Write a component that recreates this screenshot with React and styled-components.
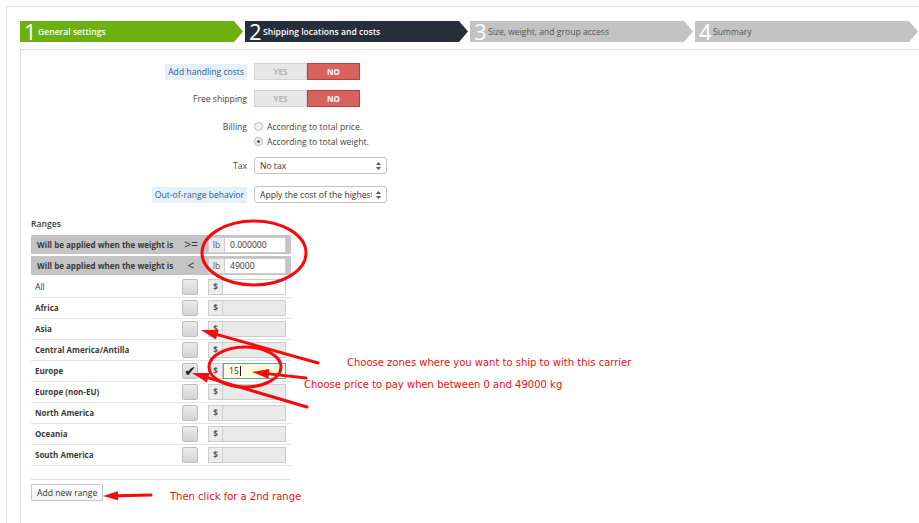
import React from "react";
import styled, { createGlobalStyle } from "styled-components";

const GlobalStyle = createGlobalStyle`
  html, body {
    margin: 0;
    padding: 0;
    background: #fff;
  }
  body {
    font-family: "Open Sans", "Liberation Sans", sans-serif;
    font-size: 8.6px;
    color: #444;
  }
`;

const Page = styled.div`
  position: relative;
  width: 919px;
  height: 523px;
  overflow: hidden;
  padding: 6px 0 0 6px;
  box-sizing: border-box;
`;

const Outer = styled.div`
  height: 100%;
  box-sizing: border-box;
  border-top: 1px solid #e0e0e0;
  border-left: 1px solid #e0e0e0;
  padding: 14px 0 0 13px;
  display: flex;
  flex-direction: column;
`;

/* wizard steps */
const Steps = styled.div`
  display: flex;
  gap: 2px;
  height: 21px;
`;

const stepBg = { done: "#6cb011", current: "#282d3c", todo: "#c3c3c3" };

const Step = styled.div`
  flex: none;
  width: 223px;
  height: 21px;
  box-sizing: border-box;
  padding-left: 4px;
  display: flex;
  align-items: center;
  background: ${(p) => stepBg[p.$state]};
  clip-path: polygon(0 0, calc(100% - 9px) 0, 100% 50%, calc(100% - 9px) 100%, 0 100%);
`;

const StepNum = styled.span`
  font-size: 22px;
  font-weight: 400;
  line-height: 21px;
  color: #fff;
  margin-right: 2px;
  width: 12px;
  text-align: center;
`;

const StepText = styled.span`
  font-size: 8.6px;
  font-weight: ${(p) => (p.$state === "todo" ? 400 : 600)};
  color: ${(p) => (p.$state === "todo" ? "#555" : "#fff")};
`;

/* form */
const FormPanel = styled.div`
  flex: 1;
  margin-top: 7px;
  border-top: 1px solid #e0e0e0;
  border-left: 1px solid #e0e0e0;
  padding: 13px 0 0 10px;
`;

const FormRow = styled.div`
  display: flex;
  align-items: ${(p) => (p.$top ? "flex-start" : "center")};
  margin-bottom: ${(p) => p.$mb || 0}px;
`;

const LabelCol = styled.div`
  flex: none;
  width: 216px;
  margin-right: 7px;
  display: flex;
  justify-content: flex-end;
  align-items: center;
  height: ${(p) => (p.$h ? `${p.$h}px` : "auto")};
`;

const Label = styled.span`
  padding: ${(p) => (p.$hint ? "2px 3px" : "0")};
  line-height: 12px;
  background: ${(p) => (p.$hint ? "#e6f0f9" : "none")};
  color: ${(p) => (p.$hint ? "#2c5d8d" : "#444")};
`;

const Toggle = styled.div`
  display: flex;
`;

const Seg = styled.div`
  width: 53px;
  height: 17px;
  box-sizing: border-box;
  display: flex;
  align-items: center;
  justify-content: center;
  font-size: 8px;
  font-weight: 700;
  background: ${(p) => (p.$on ? "#d7635f" : "#e7e7e7")};
  border: 1px solid ${(p) => (p.$on ? "#c23b36" : "#d3d3d3")};
  color: ${(p) => (p.$on ? "#fff" : "#b2b2b2")};
`;

const RadioList = styled.div`
  display: flex;
  flex-direction: column;
`;

const RadioItem = styled.div`
  height: 15px;
  display: flex;
  align-items: center;
  color: #444;
`;

const RadioDot = styled.span`
  width: 7px;
  height: 7px;
  border-radius: 50%;
  border: 1px solid #b8b8b8;
  background: #f2f2f2;
  margin-right: 4px;
  display: flex;
  align-items: center;
  justify-content: center;

  &::after {
    content: "";
    width: 3px;
    height: 3px;
    border-radius: 50%;
    background: ${(p) => (p.$checked ? "#555" : "transparent")};
  }
`;

const Select = styled.div`
  width: 133px;
  height: 17px;
  box-sizing: border-box;
  border: 1px solid #c4c4c4;
  border-radius: 3px;
  background: #fff;
  display: flex;
  align-items: center;
  padding: 0 5px 0 5px;
  color: #333;
`;

const SelectText = styled.span`
  flex: 1;
  white-space: nowrap;
  overflow: hidden;
  margin-right: 4px;
`;

const RangesTitle = styled.div`
  margin: 15px 0 5px;
  line-height: 12px;
  font-weight: 600;
  color: #3a3a3a;
`;

const RangeTable = styled.div`
  width: 260px;
`;

const HeaderRow = styled.div`
  height: 19px;
  margin-bottom: 2px;
  background: #c4c4c4;
  display: flex;
  align-items: center;
  padding: 0 5px 0 6px;
  color: #3a3a3a;
`;

const HeaderText = styled.span`
  flex: 1;
  white-space: nowrap;
  font-size: 8px;
  font-weight: 700;
`;

const Op = styled.span`
  width: 26px;
  margin-right: 4px;
  text-align: center;
  font-size: 12px;
  font-weight: 400;
  color: #333;
`;

const AddonBox = styled.div`
  flex: none;
  width: ${(p) => p.$w}px;
  height: 16px;
  box-sizing: border-box;
  background: #ececec;
  border: 1px solid #cdcdcd;
  display: flex;
  align-items: center;
  justify-content: center;
  font-weight: ${(p) => (p.$bold ? 700 : 400)};
  font-size: ${(p) => (p.$bold ? 8 : 8.6)}px;
  color: #555;
`;

const inputBg = { off: "#e9e9e9", on: "#fff", focus: "#fffbdc" };

const TextInput = styled.div`
  flex: none;
  width: ${(p) => p.$w}px;
  height: 16px;
  box-sizing: border-box;
  background: ${(p) => inputBg[p.$state]};
  border: 1px solid ${(p) => (p.$state === "focus" ? "#5b9ad6" : "#cdcdcd")};
  border-left: ${(p) => (p.$state === "focus" ? "1px solid #5b9ad6" : "none")};
  padding-left: 5px;
  display: flex;
  align-items: center;
  font-weight: 400;
  color: #333;
`;

const Caret = styled.span`
  width: 1px;
  height: 10px;
  background: #222;
  margin-left: 1px;
`;

const ZoneRow = styled.div`
  height: 21px;
  box-sizing: border-box;
  border-bottom: 1px solid #e4e4e4;
  display: flex;
  align-items: center;
  padding: 0 5px 1px 4px;
`;

const ZoneName = styled.span`
  flex: 1;
  font-size: ${(p) => (p.$bold ? 8 : 8.6)}px;
  font-weight: ${(p) => (p.$bold ? 700 : 400)};
  color: #3a3a3a;
`;

const Check = styled.div`
  flex: none;
  width: 16px;
  height: 16px;
  box-sizing: border-box;
  border: 1px solid #bdbdbd;
  border-radius: 2px;
  background: linear-gradient(#ebebeb, #d3d3d3);
  margin-right: 10px;
  display: flex;
  align-items: center;
  justify-content: center;
  font-family: "DejaVu Sans", sans-serif;
  font-size: 14px;
  line-height: 1;
  color: #1e1e1e;
`;

const Divider = styled.div`
  width: 260px;
  margin-top: 13px;
  border-top: 1px solid #e0e0e0;
`;

const Button = styled.button`
  margin-top: 4px;
  height: 17px;
  padding: 0 5px;
  box-sizing: border-box;
  border: 1px solid #c8c8c8;
  border-radius: 1px;
  background: linear-gradient(#fff, #f3f3f3);
  font-family: inherit;
  font-size: 8.6px;
  color: #333;
`;

/* annotations drawn on top of the screenshot */
const Overlay = styled.svg`
  position: absolute;
  left: 0;
  top: 0;
  pointer-events: none;
`;

const Note = styled.div`
  position: absolute;
  left: ${(p) => p.$x}px;
  top: ${(p) => p.$y}px;
  font-family: "DejaVu Sans", Verdana, sans-serif;
  font-size: 10px;
  line-height: 12px;
  color: #f20c0c;
  white-space: nowrap;
`;

const RED = "#f20c0c";

function Arrow({ tip, tail, len = 17, half = 5 }) {
  const [tx, ty] = tip;
  const [sx, sy] = tail;
  const d = Math.hypot(sx - tx, sy - ty);
  const ux = (sx - tx) / d;
  const uy = (sy - ty) / d;
  const bx = tx + ux * len;
  const by = ty + uy * len;
  const px = -uy * half;
  const py = ux * half;
  return (
    <g>
      <line x1={bx} y1={by} x2={sx} y2={sy} stroke={RED} strokeWidth="3" strokeLinecap="round" />
      <polygon points={`${tx},${ty} ${bx + px},${by + py} ${bx - px},${by - py}`} fill={RED} />
    </g>
  );
}

const steps = [
  { n: 1, label: "General settings", state: "done" },
  { n: 2, label: "Shipping locations and costs", state: "current" },
  { n: 3, label: "Size, weight, and group access", state: "todo" },
  { n: 4, label: "Summary", state: "todo" },
];

const zones = [
  { name: "All", bold: false, input: "on" },
  { name: "Africa" },
  { name: "Asia" },
  { name: "Central America/Antilla" },
  { name: "Europe", checked: true, input: "focus", value: "15" },
  { name: "Europe (non-EU)" },
  { name: "North America" },
  { name: "Oceania" },
  { name: "South America" },
];

function SelectArrows() {
  return (
    <svg width="5" height="8" viewBox="0 0 5 8">
      <polygon points="0,3 2.5,0 5,3" fill="#555" />
      <polygon points="0,5 2.5,8 5,5" fill="#555" />
    </svg>
  );
}

export default function App() {
  return (
    <Page>
      <GlobalStyle />
      <Outer>
        <Steps>
          {steps.map((s) => (
            <Step key={s.n} $state={s.state}>
              <StepNum>{s.n}</StepNum>
              <StepText $state={s.state}>{s.label}</StepText>
            </Step>
          ))}
        </Steps>

        <FormPanel>
          <FormRow $mb={10}>
            <LabelCol>
              <Label $hint>Add handling costs</Label>
            </LabelCol>
            <Toggle>
              <Seg>YES</Seg>
              <Seg $on>NO</Seg>
            </Toggle>
          </FormRow>

          <FormRow $mb={12}>
            <LabelCol>
              <Label>Free shipping</Label>
            </LabelCol>
            <Toggle>
              <Seg>YES</Seg>
              <Seg $on>NO</Seg>
            </Toggle>
          </FormRow>

          <FormRow $top $mb={8}>
            <LabelCol $h={15}>
              <Label>Billing</Label>
            </LabelCol>
            <RadioList>
              <RadioItem>
                <RadioDot />
                According to total price.
              </RadioItem>
              <RadioItem>
                <RadioDot $checked />
                According to total weight.
              </RadioItem>
            </RadioList>
          </FormRow>

          <FormRow $mb={12}>
            <LabelCol>
              <Label>Tax</Label>
            </LabelCol>
            <Select>
              <SelectText>No tax</SelectText>
              <SelectArrows />
            </Select>
          </FormRow>

          <FormRow>
            <LabelCol>
              <Label $hint>Out-of-range behavior</Label>
            </LabelCol>
            <Select>
              <SelectText>Apply the cost of the highest defined range</SelectText>
              <SelectArrows />
            </Select>
          </FormRow>

          <RangesTitle>Ranges</RangesTitle>

          <RangeTable>
            <HeaderRow>
              <HeaderText>Will be applied when the weight is</HeaderText>
              <Op>&gt;=</Op>
              <AddonBox $w={17}>lb</AddonBox>
              <TextInput $w={61} $state="on">0.000000</TextInput>
            </HeaderRow>
            <HeaderRow>
              <HeaderText>Will be applied when the weight is</HeaderText>
              <Op>&lt;</Op>
              <AddonBox $w={17}>lb</AddonBox>
              <TextInput $w={61} $state="on">49000</TextInput>
            </HeaderRow>

            {zones.map((z) => (
              <ZoneRow key={z.name}>
                <ZoneName $bold={z.bold !== false}>{z.name}</ZoneName>
                <Check>{z.checked ? "\u2714" : null}</Check>
                <AddonBox $w={15} $bold>$</AddonBox>
                <TextInput $w={63} $state={z.input || "off"}>
                  {z.value}
                  {z.input === "focus" && <Caret />}
                </TextInput>
              </ZoneRow>
            ))}
          </RangeTable>

          <Divider />
          <Button>Add new range</Button>
        </FormPanel>
      </Outer>

      <Overlay width="919" height="523" viewBox="0 0 919 523">
        <ellipse cx="254" cy="253" rx="52" ry="32" fill="none" stroke={RED} strokeWidth="3" />
        <ellipse cx="245" cy="367" rx="36" ry="20" fill="none" stroke={RED} strokeWidth="3" />
        <Arrow tip={[201, 330]} tail={[318, 363]} />
        <Arrow tip={[192, 373]} tail={[307, 407]} />
        <Arrow tip={[252, 372]} tail={[306, 378]} />
        <Arrow tip={[103, 496]} tail={[151, 495]} len={15} half={4.5} />
      </Overlay>

      <Note $x={347} $y={357}>Choose zones where you want to ship to with this carrier</Note>
      <Note $x={304} $y={379}>Choose price to pay when between 0 and 49000 kg</Note>
      <Note $x={170} $y={491}>Then click for a 2nd range</Note>
    </Page>
  );
}
